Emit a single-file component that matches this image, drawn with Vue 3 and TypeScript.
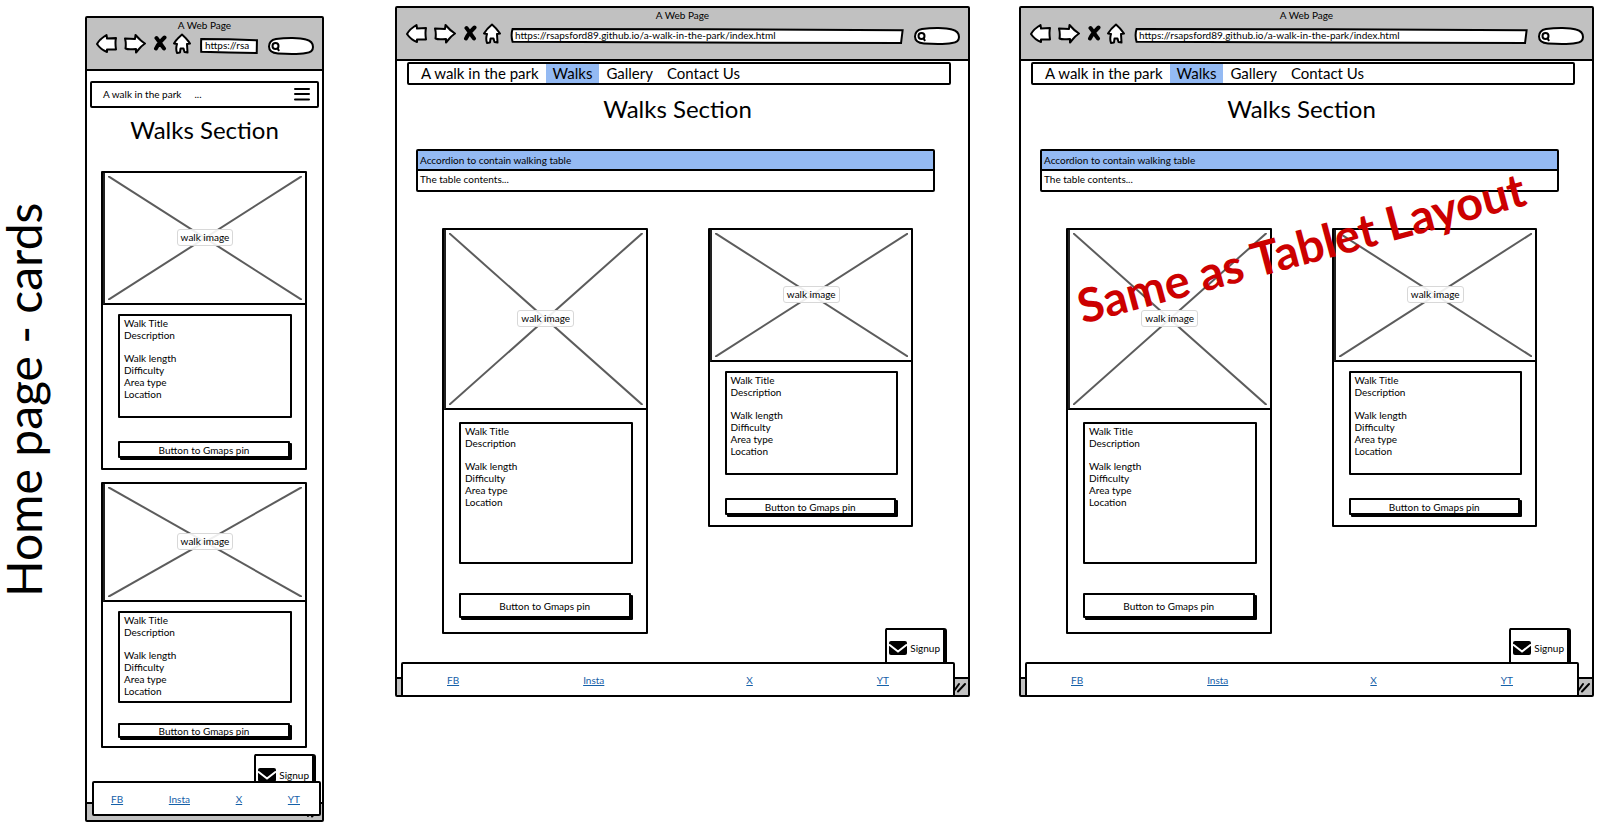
<script setup lang="ts">
interface Card {
  size: 'short' | 'medium' | 'tall'
}

interface Board {
  id: string
  kind: 'phone' | 'wide'
  url: string
  cards: Card[]
  note?: string
}

const boards: Board[] = [
  {
    id: 'phone',
    kind: 'phone',
    url: 'https://rsa',
    cards: [{ size: 'medium' }, { size: 'short' }],
  },
  {
    id: 'tablet',
    kind: 'wide',
    url: 'https://rsapsford89.github.io/a-walk-in-the-park/index.html',
    cards: [{ size: 'tall' }, { size: 'medium' }],
  },
  {
    id: 'desktop',
    kind: 'wide',
    url: 'https://rsapsford89.github.io/a-walk-in-the-park/index.html',
    cards: [{ size: 'tall' }, { size: 'medium' }],
    note: 'Same as Tablet Layout',
  },
]

const navItems: string[] = ['A walk in the park', 'Walks', 'Gallery', 'Contact Us']
const socials: string[] = ['FB', 'Insta', 'X', 'YT']
const facts: string[] = ['Walk length', 'Difficulty', 'Area type', 'Location']
</script>

<template>
  <main class="sheet">
    <h1 class="side-title">Home page - cards</h1>

    <div class="boards">
      <section v-for="board in boards" :key="board.id" class="window" :class="board.kind">
        <header class="chrome">
          <p class="chrome-title">A Web Page</p>
          <div class="toolbar">
            <button class="tool" type="button" aria-label="Back">
              <svg width="22" height="22" viewBox="0 0 22 22">
                <path d="M1 11 C3 7.500 7 4 10.500 2 L11 5.500 20 5 C19 9 19.500 13 20 16.500 L11 16.500 11 19 C7 17.500 3 14 1 11Z" />
              </svg>
            </button>
            <button class="tool" type="button" aria-label="Forward">
              <svg width="22" height="22" viewBox="0 0 22 22">
                <path d="M1 5.500 11 6 11.500 2 C14 5 17 8 21 10.500 C17 13 15 16 12 19.500 L12 16 C8 16 5 17 1.500 15.500 C2 12 2 9 1 5.500Z" />
              </svg>
            </button>
            <button class="tool stop" type="button" aria-label="Stop">
              <svg width="14" height="22" viewBox="0 0 14 22">
                <path class="cross" d="M3.500 5 C6 8 8 12 11 15.500M11.500 4.500 C9 7 5 11 3 15.500" />
              </svg>
            </button>
            <button class="tool" type="button" aria-label="Home">
              <svg width="18" height="22" viewBox="0 0 18 22">
                <path d="M9 1.500 C6 4 3 7 1 10.500 L4 11 C3 14 3 17 4 20 L7 19.500 7.500 15.500 10.500 15.500 11.500 19 14.500 19.500 14 11 17 10.500 C14.500 7 12 4 9 1.500Z" />
              </svg>
            </button>
            <div class="field address">
              <svg class="outline" viewBox="0 0 100 16" preserveAspectRatio="none" aria-hidden="true">
                <path d="M.4 1 50 1.200 99.900 2.300 99.500 15 50 14.600 .4 13.800 Q-.1 7 .4 1Z" />
              </svg>
              <input type="text" :value="board.url" aria-label="Address" />
            </div>
            <div class="field search">
              <svg class="outline" viewBox="0 0 46 18" aria-hidden="true">
                <path d="M8 2 C18 .5 32 .5 38 2.500 C44 4 45 7 45 10 C45 14 43 15.500 38 16 C30 17.500 18 17 10 16.500 C4 16 1 13 1 9.500 C1 5.500 3 3 8 2Z" />
                <circle cx="7.500" cy="9" r="3" />
                <path d="M9.500 11 11 14" />
              </svg>
              <input type="text" aria-label="Search" />
            </div>
          </div>
        </header>

        <nav v-if="board.kind === 'phone'" class="phone-nav">
          <a href="#">A walk in the park</a>
          <span class="dots">...</span>
          <button type="button" aria-label="Menu">
            <svg width="16" height="14" viewBox="0 0 16 14">
              <path d="M1 2H15M1 7H15M1 12.500H15" />
            </svg>
          </button>
        </nav>
        <nav v-else class="wide-nav">
          <a v-for="item in navItems" :key="item" href="#" :class="{ active: item === 'Walks' }">{{ item }}</a>
        </nav>

        <h2 class="heading">Walks Section</h2>

        <div v-if="board.kind === 'wide'" class="accordion">
          <button type="button" aria-expanded="true">Accordion to contain walking table</button>
          <p>The table contents...</p>
        </div>

        <div class="cards">
          <article v-for="(card, index) in board.cards" :key="index" class="card" :class="card.size">
            <div class="picture">
              <svg aria-hidden="true">
                <line x1="0" y1="0" x2="100%" y2="100%" />
                <line x1="100%" y1="0" x2="0" y2="100%" />
              </svg>
              <span>walk image</span>
            </div>
            <div class="details">
              <p>Walk Title</p>
              <p>Description</p>
              <ul>
                <li v-for="fact in facts" :key="fact">{{ fact }}</li>
              </ul>
            </div>
            <button class="pin" type="button">Button to Gmaps pin</button>
          </article>
        </div>

        <div class="bottom">
          <button class="signup" type="button">
            <svg width="18" height="14" viewBox="0 0 18 14" aria-hidden="true">
              <rect width="18" height="14" rx="2" />
              <path d="M0 3.500 9 10.500 18 3.500" />
            </svg>
            Signup
          </button>
          <div class="dock">
            <div class="status">
              <svg width="14" height="14" viewBox="0 0 14 14" aria-hidden="true">
                <path d="M1 11 6 4M5 11.500 12 4" />
              </svg>
            </div>
            <footer class="socials">
              <a v-for="name in socials" :key="name" href="#">{{ name }}</a>
            </footer>
          </div>
        </div>

        <p v-if="board.note" class="note">{{ board.note }}</p>
      </section>
    </div>
  </main>
</template>

<style>
body {
  margin: 0;
  background: #fff;
}
</style>

<style scoped>
* {
  box-sizing: border-box;
}

.sheet {
  display: flex;
  min-height: 100vh;
  background: #fff;
  color: #000;
  font-family: Lato, "Open Sans", sans-serif;
  font-size: 10px;
  line-height: 12px;
}

h1,
h2,
p,
ul {
  margin: 0;
  padding: 0;
  font-weight: 400;
}

ul {
  list-style: none;
}

a {
  color: inherit;
  text-decoration: none;
}

button,
input {
  font: inherit;
  color: inherit;
  padding: 0;
  border: 0;
  background: none;
}

.side-title {
  flex: none;
  width: 85px;
  padding-top: 26px;
  padding-left: 37px;
  writing-mode: vertical-rl;
  transform: rotate(180deg);
  text-align: center;
  font-size: 48px;
  line-height: 48px;
}

.boards {
  flex: 1;
  min-width: 0;
  display: grid;
  grid-template-columns: 261px minmax(0, 1fr) minmax(0, 1fr);
  column-gap: 49px;
  align-items: start;
  padding: 6px 13px 4px 0;
}

.window {
  position: relative;
  border: 2px solid #000;
  border-radius: 2px;
}

.window.phone {
  width: 239px;
  margin-top: 10px;
}

.chrome {
  height: 53px;
  border-bottom: 2px solid #000;
  background: #c1c1c1;
}

.chrome-title {
  padding-top: 1px;
  text-align: center;
}

.toolbar {
  display: flex;
  align-items: center;
  padding: 2px 8px 0 9px;
}

.tool {
  display: flex;
  margin-right: 6px;
}

.tool.stop {
  margin-left: 1px;
}

.tool path {
  fill: #fff;
  stroke: #000;
  stroke-width: 2;
  stroke-linejoin: round;
}

.tool .cross {
  fill: none;
  stroke-width: 4;
  stroke-linecap: round;
}

.field {
  position: relative;
  display: flex;
}

.field input {
  position: relative;
  width: 100%;
  outline: 0;
}

.outline {
  position: absolute;
  inset: 0;
  width: 100%;
  height: 100%;
  overflow: visible;
}

.outline path,
.outline circle {
  fill: #fff;
  stroke: #000;
  stroke-width: 2;
  vector-effect: non-scaling-stroke;
}

.address {
  flex: 1;
  min-width: 0;
  height: 16px;
  margin: 3px 11px 0 4px;
}

.address input {
  padding: 0 4px 1px;
}

.search {
  flex: none;
  width: 46px;
  height: 18px;
  margin-top: 3px;
}

.search input {
  padding-left: 14px;
}

.phone-nav {
  display: flex;
  align-items: center;
  height: 27px;
  margin: 10px 3px 0;
  padding: 0 7px 2px 11px;
  border: 2px solid #000;
  border-radius: 2px;
}

.phone-nav .dots {
  margin-left: 13px;
}

.phone-nav button {
  display: flex;
  margin-left: auto;
}

.phone-nav path {
  stroke: #000;
  stroke-width: 2;
  stroke-linecap: round;
}

.wide-nav {
  display: flex;
  height: 23px;
  margin: 1px 17px 0 10px;
  padding-left: 5px;
  border: 2px solid #000;
  border-radius: 2px;
  font-size: 15px;
  line-height: 18px;
}

.wide-nav a {
  padding: 0 7px;
}

.wide-nav .active {
  background: #94baf3;
}

.heading {
  text-align: center;
  font-size: 24px;
  line-height: 30px;
}

.phone .heading {
  margin-top: 7px;
}

.wide .heading {
  margin: 9px 10px 0 0;
}

.accordion {
  margin: 25px 33px 0 19px;
  border: 2px solid #000;
  border-radius: 2px;
}

.accordion button,
.accordion p {
  display: block;
  width: 100%;
  padding: 2px 2px 3px;
  text-align: left;
}

.accordion button {
  height: 20px;
  border-bottom: 2px solid #000;
  background: #94baf3;
}

.accordion p {
  height: 19px;
}

.cards {
  display: grid;
  align-items: start;
}

.phone .cards {
  margin: 26px 15px 0 14px;
  row-gap: 12px;
}

.wide .cards {
  grid-template-columns: 1fr 1fr;
  column-gap: 60px;
  margin: 36px 55px 0 45px;
}

.card {
  display: flex;
  flex-direction: column;
  border: 2px solid #000;
  border-radius: 1px;
}

.picture {
  position: relative;
  display: grid;
  place-items: center;
  height: 132px;
  padding: 3px;
  border-left: 2px solid #222;
  border-bottom: 2px solid #000;
}

.picture svg {
  grid-area: 1 / 1;
  width: 100%;
  height: 100%;
}

.picture line {
  stroke: #5c5c5c;
  stroke-width: 2;
}

.picture span {
  z-index: 1;
  grid-area: 1 / 1;
  margin-bottom: 2px;
  padding: 1px 3px 2px;
  border: 1px solid #d8d8d8;
  border-radius: 3px;
  background: rgba(255, 255, 255, 0.9);
}

.details {
  height: 104px;
  margin: 9px 13px 0 15px;
  padding: 1px 4px;
  border: 2px solid #000;
  border-radius: 1px;
}

.details ul {
  margin-top: 11px;
}

.pin {
  height: 17px;
  margin: 23px 15px 10px 15px;
  border: 2px solid #000;
  border-radius: 1px;
  background: #fff;
  box-shadow: 2px 2px 0 #000;
  line-height: 12px;
}

.tall .picture {
  height: 180px;
}

.tall .details {
  height: 142px;
  margin-top: 12px;
}

.tall .pin {
  height: 25px;
  margin-top: 29px;
  margin-bottom: 14px;
}

.short .picture {
  height: 118px;
}

.short .details {
  height: 92px;
}

.short .pin {
  height: 15px;
  margin-top: 20px;
  margin-bottom: 8px;
  line-height: 10px;
}

.bottom {
  display: flex;
  flex-direction: column;
}

.signup {
  align-self: flex-end;
  display: flex;
  align-items: center;
  gap: 3px;
  border: 2px solid #000;
  border-right-width: 4px;
  border-bottom: 0;
  border-radius: 2px 3px 0 0;
  background: #fff;
}

.signup path {
  fill: none;
  stroke: #fff;
  stroke-width: 2;
}

.phone .signup {
  height: 27px;
  margin: 6px 6px 0 0;
  padding: 12px 3px 0 2px;
}

.wide .signup {
  height: 34px;
  margin: -6px 21px 0 0;
  padding: 4px 3px 0 2px;
}

.dock {
  display: grid;
}

.status {
  grid-area: 1 / 1;
  align-self: end;
  display: flex;
  justify-content: flex-end;
  align-items: center;
  height: 18px;
  border-top: 2px solid #000;
  background: #c1c1c1;
}

.status svg {
  margin-right: 1px;
}

.status path {
  stroke: #000;
  stroke-width: 2;
  stroke-linecap: round;
}

.socials {
  z-index: 1;
  grid-area: 1 / 1;
  display: flex;
  justify-content: space-between;
  align-items: center;
  height: 35px;
  border: 2px solid #000;
  border-radius: 2px;
  background: #fff;
  color: #1560a8;
}

.socials a {
  text-decoration: underline;
}

.phone .socials {
  margin: 0 1px 4px 5px;
  padding: 0 19px 0 17px;
}

.wide .socials {
  margin: 0 13px -2px 4px;
  padding: 0 64px 0 44px;
}

.wide .socials a:nth-child(2) {
  margin-right: 18px;
}

.note {
  position: absolute;
  top: 214px;
  left: 49%;
  width: max-content;
  transform: translateX(-50%) rotate(-15deg);
  color: #cc0000;
  font-size: 47px;
  font-weight: 700;
  line-height: 50px;
}
</style>
